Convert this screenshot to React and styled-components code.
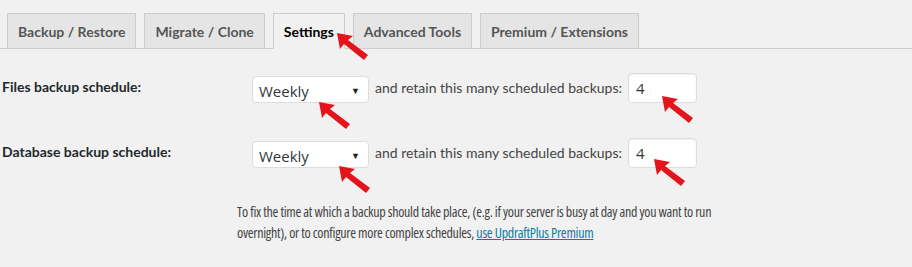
import React from 'react'
import styled, { createGlobalStyle } from 'styled-components'

const GlobalStyle = createGlobalStyle`
  html, body {
    margin: 0;
    padding: 0;
    background: #f1f1f1;
  }
  body {
    font-family: Lato, "Open Sans", "Liberation Sans", sans-serif;
    color: #32373c;
  }
`

const tabs = ['Backup / Restore', 'Migrate / Clone', 'Settings', 'Advanced Tools', 'Premium / Extensions']

const rows = [
  { label: 'Files backup schedule:', value: 'Weekly', retain: 4 },
  { label: 'Database backup schedule:', value: 'Weekly', retain: 4 },
]

const arrows = [
  { x: 337, y: 33 },
  { x: 319, y: 102 },
  { x: 662, y: 96 },
  { x: 339, y: 166 },
  { x: 654, y: 159 },
]

function Arrow({ x, y }) {
  return (
    <ArrowMark style={{ left: x, top: y }} width="32" height="28" viewBox="0 0 32 28">
      <polygon points="0,0 16,3 11,7 31,22 27,27 7,11 3,16" fill="#e3141c" />
    </ArrowMark>
  )
}

export default function App() {
  return (
    <>
      <GlobalStyle />
      <Page>
        <TabNav>
          {tabs.map((t) => (
            <Tab key={t} $active={t === 'Settings'}>{t}</Tab>
          ))}
        </TabNav>
        <Form>
          {rows.map((r) => (
            <Row key={r.label}>
              <Label>{r.label}</Label>
              <Controls>
                <Select>
                  <span>{r.value}</span>
                  <Caret>▼</Caret>
                </Select>
                <Inline>and retain this many scheduled backups:</Inline>
                <NumberBox>{r.retain}</NumberBox>
              </Controls>
            </Row>
          ))}
        </Form>
        <Note>
          To fix the time at which a backup should take place, (e.g. if your server is busy at day and you want to run
          overnight), or to configure more complex schedules, <NoteLink href="#">use UpdraftPlus Premium</NoteLink>
        </Note>
        {arrows.map((a, i) => (
          <Arrow key={i} x={a.x} y={a.y} />
        ))}
      </Page>
    </>
  )
}

const Page = styled.div`
  position: relative;
  width: 912px;
  height: 267px;
  overflow: hidden;
  padding-top: 13px;
  box-sizing: border-box;
`

const TabNav = styled.div`
  display: flex;
  gap: 8px;
  padding-left: 7px;
  border-bottom: 1px solid #ccc;
  height: 35px;
`

const Tab = styled.div`
  box-sizing: border-box;
  height: 36px;
  padding: 0 10px;
  display: flex;
  align-items: center;
  font-size: 14px;
  font-weight: 700;
  color: ${(p) => (p.$active ? '#000' : '#555')};
  background: ${(p) => (p.$active ? '#f1f1f1' : '#e5e5e5')};
  border: 1px solid #ccc;
  border-bottom-color: ${(p) => (p.$active ? '#f1f1f1' : '#ccc')};
`

const Form = styled.div`
  display: flex;
  flex-direction: column;
  gap: 35px;
  padding-top: 23px;
`

const Row = styled.div`
  display: grid;
  grid-template-columns: 252px 1fr;
  align-items: center;
  height: 30px;
`

const Label = styled.div`
  padding-left: 2px;
  font-size: 14px;
  font-weight: 700;
  color: #23282d;
  margin-top: -2px;
`

const Controls = styled.div`
  display: flex;
  align-items: center;
`

const Select = styled.div`
  box-sizing: border-box;
  width: 117px;
  height: 27px;
  margin-top: 4px;
  background: #fff;
  border: 1px solid #ddd;
  border-radius: 4px;
  display: flex;
  align-items: center;
  justify-content: space-between;
  padding: 2px 8px 0 6px;
  font-family: "Open Sans", sans-serif;
  font-size: 15px;
  color: #32373c;
`

const Caret = styled.span`
  font-size: 9px;
  color: #222;
`

const Inline = styled.span`
  margin-left: 6px;
  font-size: 14px;
  color: #444;
`

const NumberBox = styled.div`
  box-sizing: border-box;
  width: 69px;
  height: 30px;
  margin-left: 6px;
  background: #fff;
  border: 1px solid #ddd;
  border-radius: 4px;
  box-shadow: inset 0 1px 2px rgba(0, 0, 0, 0.07);
  display: flex;
  align-items: center;
  padding-left: 7px;
  font-family: "Open Sans", sans-serif;
  font-size: 15px;
  color: #32373c;
`

const Note = styled.p`
  margin: 34px 0 0 237px;
  width: 490px;
  font-family: "Open Sans", sans-serif;
  font-stretch: 75%;
  letter-spacing: -0.27px;
  font-size: 14px;
  line-height: 21px;
  color: #444;
`

const NoteLink = styled.a`
  color: #0f7aa8;
  text-decoration: underline;
`

const ArrowMark = styled.svg`
  position: absolute;
  display: block;
`
